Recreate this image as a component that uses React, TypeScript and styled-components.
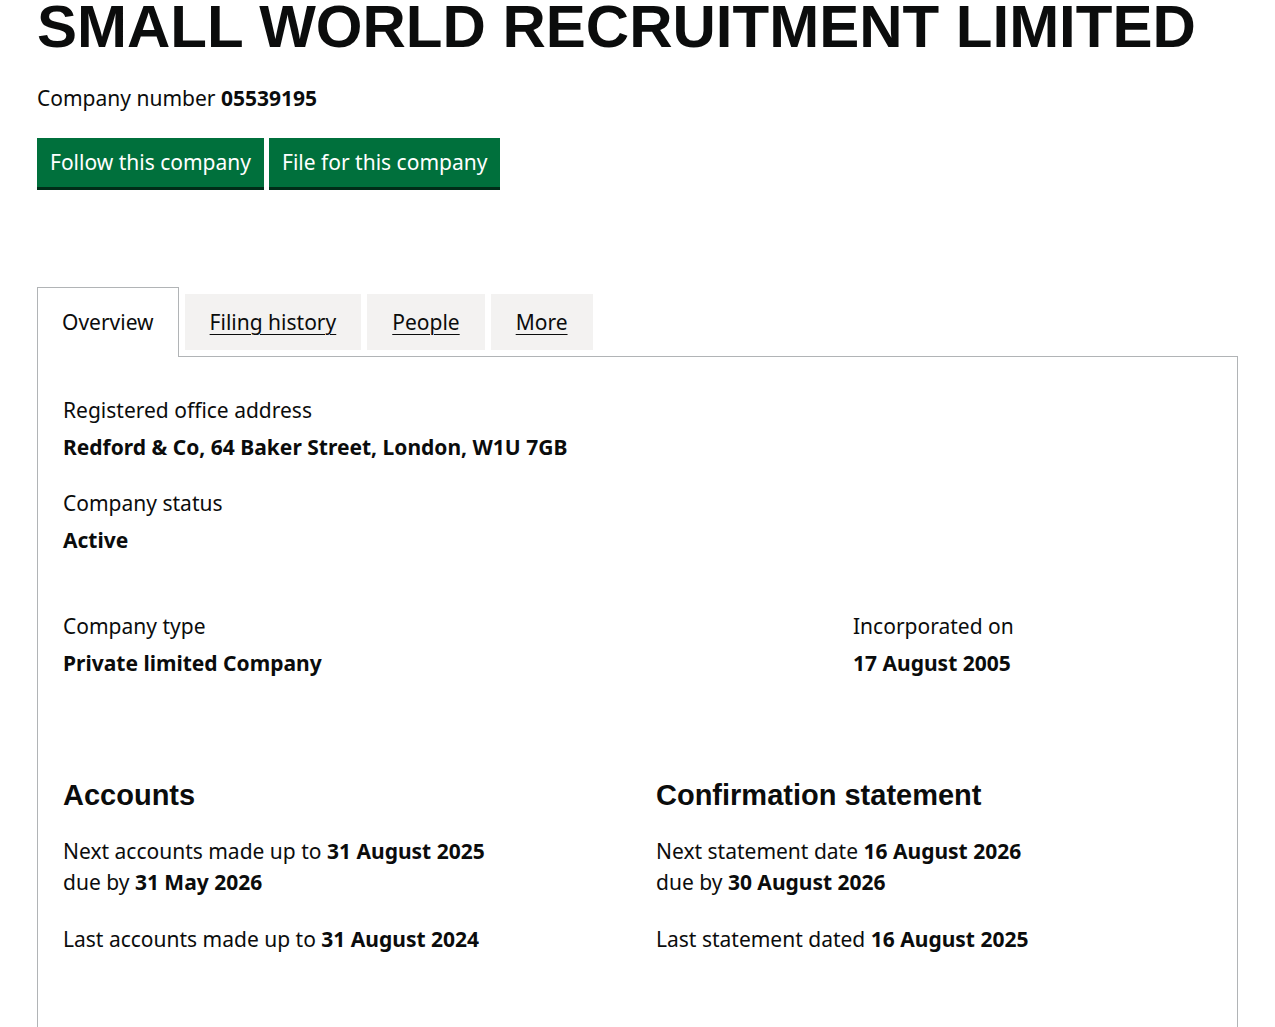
import React from "react";
import styled, { createGlobalStyle } from "styled-components";

const Global = createGlobalStyle`
  body { margin: 0; background: #fff; color: #0b0c0c; font-family: "Noto Sans", Arial, sans-serif; }
`;

const Page = styled.div`
  padding: 0 37px;
`;
const Title = styled.h1`
  font-family: "Liberation Sans", Arial, sans-serif;
  font-weight: 700;
  font-size: 60px;
  line-height: 1;
  margin: -3px 0 0;
  white-space: nowrap;
`;
const Number = styled.p`
  font-size: 21px;
  margin: 26px 0 0;
  line-height: 30px;
  b { font-weight: 700; }
`;
const Buttons = styled.div`
  display: flex;
  gap: 5px;
  margin-top: 25px;
`;
const Button = styled.a`
  background: #00703c;
  color: #fff;
  font-size: 21px;
  line-height: 25px;
  padding: 12px 13px 12px;
  box-shadow: 0 3px 0 #002d18;
  height: 25px;
  cursor: pointer;
`;
const Tabs = styled.div`
  display: flex;
  align-items: flex-end;
  gap: 6px;
  margin-top: 100px;
`;
const Tab = styled.div<{ $active?: boolean }>`
  font-size: 21px;
  padding: ${(p) => (p.$active ? "20px 24px 21px" : "14px 25px 14px")};
  background: ${(p) => (p.$active ? "#fff" : "#f3f2f1")};
  border: ${(p) => (p.$active ? "1px solid #b1b4b6" : "none")};
  border-bottom: none;
  margin-bottom: ${(p) => (p.$active ? "-1px" : "6px")};
  line-height: 28px;
  position: relative;
  z-index: 1;
  span { text-decoration: ${(p) => (p.$active ? "none" : "underline")}; text-underline-offset: 4px; text-decoration-thickness: 1px; }
`;
const Panel = styled.div`
  border: 1px solid #b1b4b6;
  padding: 38px 25px 60px;
  min-height: 620px;
`;
const Label = styled.div`
  font-size: 21px;
  line-height: 30px;
`;
const Value = styled.div`
  font-size: 21px;
  font-weight: 700;
  line-height: 30px;
  margin-top: 7px;
`;
const Block = styled.div<{ $gap?: number }>`
  margin-bottom: ${(p) => p.$gap ?? 20}px;
`;
const Row = styled.div<{ $cols: string; $gap?: number }>`
  display: grid;
  grid-template-columns: ${(p) => p.$cols};
  margin-bottom: ${(p) => p.$gap ?? 0}px;
`;
const H2 = styled.h2`
  font-family: "Liberation Sans", Arial, sans-serif;
  font-size: 29px;
  font-weight: 700;
  margin: 0 0 24px;
  line-height: 34px;
`;
const Line = styled.p<{ $mb?: number }>`
  font-size: 21px;
  line-height: 31px;
  margin: 0 0 ${(p) => p.$mb ?? 0}px;
  b { font-weight: 700; }
`;

export default function App() {
  return (
    <Page>
      <Global />
      <Title>SMALL WORLD RECRUITMENT LIMITED</Title>
      <Number>Company number <b>05539195</b></Number>
      <Buttons>
        <Button>Follow this company</Button>
        <Button>File for this company</Button>
      </Buttons>
      <Tabs>
        <Tab $active><span>Overview</span></Tab>
        <Tab><span>Filing history</span></Tab>
        <Tab><span>People</span></Tab>
        <Tab><span>More</span></Tab>
      </Tabs>
      <Panel>
        <Block $gap={26}>
          <Label>Registered office address</Label>
          <Value>Redford &amp; Co, 64 Baker Street, London, W1U 7GB</Value>
        </Block>
        <Block $gap={56}>
          <Label>Company status</Label>
          <Value>Active</Value>
        </Block>
        <Row $cols="790px 1fr" $gap={100}>
          <div>
            <Label>Company type</Label>
            <Value>Private limited Company</Value>
          </div>
          <div>
            <Label>Incorporated on</Label>
            <Value>17 August 2005</Value>
          </div>
        </Row>
        <Row $cols="593px 1fr">
          <div>
            <H2>Accounts</H2>
            <Line>Next accounts made up to <b>31 August 2025</b></Line>
            <Line $mb={26}>due by <b>31 May 2026</b></Line>
            <Line>Last accounts made up to <b>31 August 2024</b></Line>
          </div>
          <div>
            <H2>Confirmation statement</H2>
            <Line>Next statement date <b>16 August 2026</b></Line>
            <Line $mb={26}>due by <b>30 August 2026</b></Line>
            <Line>Last statement dated <b>16 August 2025</b></Line>
          </div>
        </Row>
      </Panel>
    </Page>
  );
}
